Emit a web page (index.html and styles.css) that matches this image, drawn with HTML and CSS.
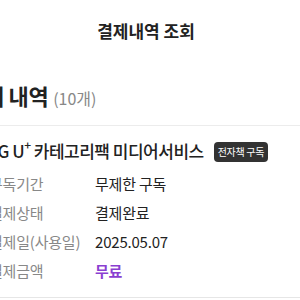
FILE: index.html
```html
<html>
  <head>
    <title>결제내역 조회</title>
    <link rel="stylesheet" href="styles.css">
  </head>
  <body>
    <div class="header">결제내역 조회</div>
    <div class="list">
      <div class="list-head">결제 내역 <span class="count">(10개)</span></div>
      <div class="card">
        <div class="card-title">LG U<sup>+</sup> 카테고리팩 미디어서비스<span class="badge">전자책 구독</span></div>
        <div class="row"><span class="label">구독기간</span><span class="value">무제한 구독</span></div>
        <div class="row"><span class="label">결제상태</span><span class="value">결제완료</span></div>
        <div class="row"><span class="label">결제일(사용일)</span><span class="value">2025.05.07</span></div>
        <div class="row"><span class="label">결제금액</span><span class="value free">무료</span></div>
      </div>
    </div>
  </body>
</html>
```
FILE: styles.css
```css
* {box-sizing: border-box;}
body {margin: 0; background: #fff; color: #222; font-family: "Noto Sans CJK KR", "Noto Sans", sans-serif; overflow: hidden;}
.header {height: 60px; display: flex; align-items: center; justify-content: center; font-size: 17px; font-weight: 700; padding-right: 8px;}
.list {margin-left: -36px;}
.list-head {font-size: 22px; font-weight: 700; line-height: 30px; padding: 20px 0 12px; border-bottom: 1px solid #ececec; letter-spacing: -0.3px;}
.list-head .count {font-size: 16px; font-weight: 400; color: #888; letter-spacing: 0;}
.card {padding: 13px 0 12px 25px; border-bottom: 1px solid #e6e6e6;}
.card-title {font-size: 17px; font-weight: 500; line-height: 24px; margin-bottom: 6px; white-space: nowrap; letter-spacing: -0.5px;}
.card-title sup {font-size: 12px; line-height: 0; position: relative; top: -1px;}
.badge {display: inline-block; vertical-align: 2px; margin-left: 10px; background: #333; color: #fff; font-size: 10px; font-weight: 400; line-height: 20px; padding: 0 4px; border-radius: 4px; letter-spacing: -0.3px;}
.row {display: flex; font-size: 15px; line-height: 29px; letter-spacing: -0.2px;}
.label {width: 106px; color: #888;}
.value {color: #222;}
.free {color: #8a3fd1; font-weight: 700;}
```
